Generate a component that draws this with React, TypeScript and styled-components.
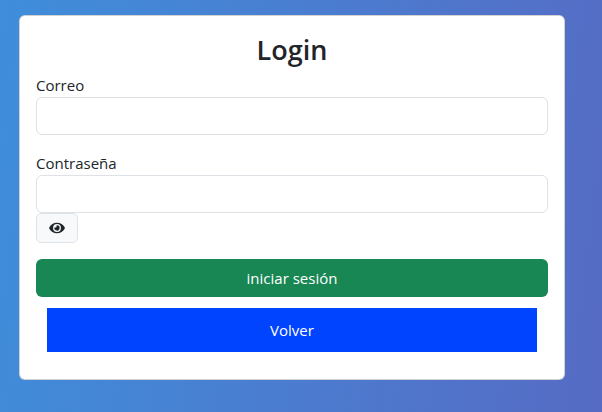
import React from "react";
import styled, { createGlobalStyle } from "styled-components";

const GlobalStyle = createGlobalStyle`
  *, *::before, *::after { box-sizing: border-box; }
  body {
    margin: 0;
    font-family: "Segoe UI", "Open Sans", "Noto Sans", sans-serif;
    font-size: 15px;
    line-height: 24px;
    color: #212529;
  }
`;

const Page = styled.main`
  height: 100vh;
  padding: 15px 37px 0 19px;
  overflow: hidden;
  background: linear-gradient(97deg, #3f8edb 0%, #566bc4 100%);
`;

const Card = styled.form`
  display: flex;
  flex-direction: column;
  height: 365px;
  padding: 17px 16px 16px;
  border: 1px solid rgba(0, 0, 0, 0.175);
  border-radius: 6px;
  background: #fff;
`;

const Title = styled.h1`
  margin: 0 0 6px;
  font-size: 27px;
  font-weight: 600;
  line-height: 34px;
  text-align: center;
`;

const Field = styled.div`
  display: flex;
  flex-direction: column;
  align-items: flex-start;
  margin-bottom: 16px;
`;

const Label = styled.label`
  height: 24px;
`;

const Input = styled.input`
  width: 100%;
  height: 38px;
  padding: 6px 12px;
  border: 1px solid #dee2e6;
  border-radius: 6px;
  background: #fff;
  font: inherit;
  outline: none;
`;

const Toggle = styled.button`
  display: flex;
  align-items: center;
  justify-content: center;
  width: 42px;
  height: 30px;
  padding: 0;
  border: 1px solid #dfe3e8;
  border-radius: 5px;
  background: #f8f9fa;
  color: #212529;
`;

const Submit = styled.button`
  height: 38px;
  flex: none;
  padding: 0 12px;
  border: 0;
  border-radius: 6px;
  background: #198754;
  color: #fff;
  font: inherit;
`;

const Back = styled.button`
  height: 44px;
  flex: none;
  margin: 11px 11px 0;
  padding: 0;
  border: 0;
  background: #0044ff;
  color: #fff;
  font: inherit;
`;

const EyeIcon = () => (
  <svg width="16" height="14" viewBox="0 0 576 512" fill="currentColor" aria-hidden="true">
    <path d="M572.52 241.4C518.29 135.59 410.93 64 288 64S57.68 135.64 3.48 241.41a32.35 32.35 0 0 0 0 29.19C57.71 376.41 165.07 448 288 448s230.32-71.64 284.52-177.41a32.35 32.35 0 0 0 0-29.19zM288 400a144 144 0 1 1 144-144 143.93 143.93 0 0 1-144 144zm0-240a95.31 95.31 0 0 0-25.31 3.79 47.85 47.85 0 0 1-66.9 66.9A95.78 95.78 0 1 0 288 160z" />
  </svg>
);

export default function App() {
  return (
    <>
      <GlobalStyle />
      <Page>
        <Card onSubmit={(e) => e.preventDefault()}>
          <Title>Login</Title>
          <Field>
            <Label htmlFor="correo">Correo</Label>
            <Input id="correo" type="email" />
          </Field>
          <Field>
            <Label htmlFor="clave">Contraseña</Label>
            <Input id="clave" type="password" />
            <Toggle type="button" aria-label="Mostrar contraseña">
              <EyeIcon />
            </Toggle>
          </Field>
          <Submit type="submit">iniciar sesión</Submit>
          <Back type="button">Volver</Back>
        </Card>
      </Page>
    </>
  );
}
